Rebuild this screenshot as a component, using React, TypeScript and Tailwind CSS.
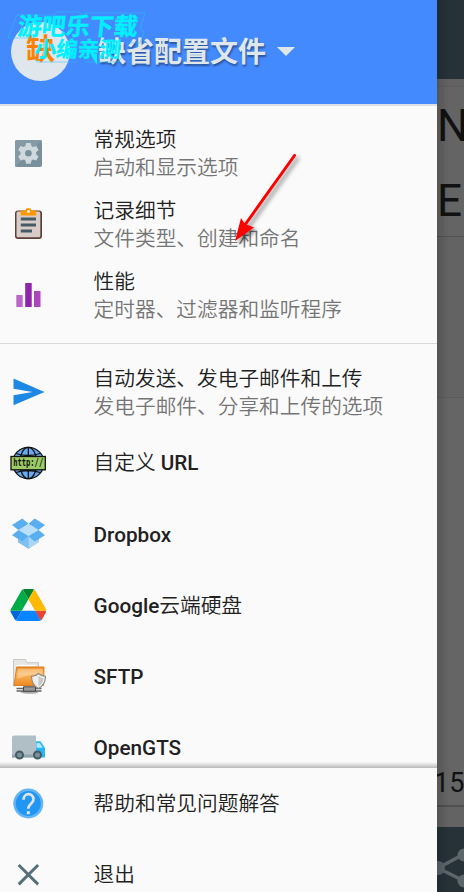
import type { ReactNode } from 'react'

type Item = {
  icon: ReactNode
  title: ReactNode
  subtitle?: string
}

function GearIcon() {
  return (
    <svg className="size-9" viewBox="0 0 36 36">
      <rect x="5" y="5" width="27" height="27" rx="2" fill="#78909c" />
      <path d="M7 5H32L5 32V7a2 2 0 0 1 2-2z" fill="#849aa5" />
      <g fill="#cfd8dc">
        <circle cx="18.400" cy="18.300" r="7.800" />
        {[0, 60, 120].map((angle) => (
          <path key={angle} d="M16.100 7.900h4.600l.9 4v12.800l-.9 4h-4.600l-.9-4V11.900z" transform={`rotate(${angle} 18.400 18.300)`} />
        ))}
      </g>
      <circle cx="18.400" cy="18.300" r="3.300" fill="#78909c" />
    </svg>
  )
}

function ClipboardIcon() {
  return (
    <svg className="size-9" viewBox="0 0 36 36">
      <rect x="5" y="4.500" width="27" height="28.500" rx="3" fill="#5d4037" />
      <rect x="6.500" y="5.500" width="23.800" height="25.700" rx="1.500" fill="#d7ccc8" />
      <path d="M10.700 4.500h4.500a3.300 3.300 0 0 1 6.400 0h4.500v5H10.700z" fill="#ff9800" />
      <circle cx="18.400" cy="5.500" r="1.400" fill="#fff" />
      <path d="M10.800 11.500H26v3H10.800zM10.800 17.500H26v3H10.800zM10.800 23.500H22v3H10.800z" fill="#455a64" />
    </svg>
  )
}

function BarsIcon() {
  return (
    <svg className="size-9" viewBox="0 0 36 36">
      <path d="M6.300 18h6.400v12H6.300z" fill="#ba68c8" />
      <path d="M15.200 6h6.500v24h-6.500z" fill="#8e24aa" />
      <path d="M24 14h6.500v16H24z" fill="#ab47bc" />
    </svg>
  )
}

function SendIcon() {
  return (
    <svg className="size-9" viewBox="0 0 36 36">
      <path d="M3.500 4.500 34.500 18 3.500 31.300V21.200L22.500 18 3.500 14.800z" fill="#1e88e5" />
    </svg>
  )
}

function GlobeIcon() {
  return (
    <svg className="size-9" viewBox="0 0 36 36">
      <g stroke="#111" strokeWidth="1.300" fill="none">
        <circle cx="18.300" cy="18" r="15.700" fill="#6aaaf0" />
        <ellipse cx="18.300" cy="18" rx="8.500" ry="15.700" />
        <path d="M18.300 2v32M6 8.500q12 4 24 0M6 27.500q12-4 24 0" />
      </g>
      <rect x="1" y="11.500" width="34.300" height="13.300" fill="#9ccc65" stroke="#111" strokeWidth="1.300" />
      <text
        x="3.200"
        y="21.300"
        textLength="30"
        lengthAdjust="spacingAndGlyphs"
        fontSize="10"
        fontWeight="700"
        fill="#111"
        fontFamily="'DejaVu Sans Mono', monospace"
      >
        http://
      </text>
    </svg>
  )
}

function DropboxIcon() {
  return (
    <svg className="size-9" viewBox="-0.500 1.500 36 36">
      <path d="M7.500 20.500 18 14l10.500 6.500v6L18 33.300 7.500 26.500z" fill="#90caf9" />
      <path d="M18 20.500 28.500 22v4.500L18 33.300z" fill="#a9d5f7" />
      <path d="M18 8.500 28 14.500 18 20.500 8 14.500z" fill="#bbdefb" />
      <g fill="#58aeee">
        <path d="M11.800 3 18 8.300 8 14.500 1.500 9.500z" />
        <path d="M24.200 3 18 8.300l10 6.200 6.500-5z" />
        <path d="M8 14.500 18 20.700 11.800 26 1.500 19.800z" />
        <path d="M28 14.500 18 20.700l6.200 5.300 10.300-6.200z" />
      </g>
      <path d="m18 21-6.200 5.200-4.300-2.500v3L18 33.300z" fill="#7fc0f2" />
    </svg>
  )
}

function DriveIcon() {
  return (
    <svg className="size-9" viewBox="-1 2.500 87.300 78">
      <path d="m6.600 66.850 3.850 6.650c.8 1.400 1.950 2.500 3.300 3.300l13.750-23.800h-27.500c0 1.550.4 3.100 1.200 4.500z" fill="#0066da" />
      <path d="m43.650 25-13.750-23.800c-1.350.8-2.500 1.900-3.300 3.300l-25.400 44a9.060 9.060 0 0 0 -1.200 4.500h27.500z" fill="#00ac47" />
      <path d="m73.550 76.800c1.350-.8 2.500-1.900 3.300-3.300l1.600-2.750 7.650-13.250c.8-1.400 1.200-2.950 1.200-4.500h-27.502l5.852 11.500z" fill="#ea4335" />
      <path d="m43.650 25 13.750-23.800c-1.350-.8-2.900-1.200-4.500-1.200h-18.500c-1.600 0-3.150.45-4.500 1.200z" fill="#00832d" />
      <path d="m59.800 53h-32.300l-13.750 23.800c1.350.8 2.900 1.200 4.500 1.200h50.800c1.600 0 3.150-.45 4.500-1.200z" fill="#0b84ff" />
      <path d="m73.400 26.500-12.700-22c-.8-1.400-1.950-2.500-3.300-3.300l-13.750 23.800 16.150 28h27.450c0-1.550-.4-3.100-1.200-4.500z" fill="#ffba00" />
    </svg>
  )
}

function SftpIcon() {
  return (
    <svg className="size-9" viewBox="-0.500 1 36 36">
      <defs>
        <linearGradient id="folder" x1="0" y1="0" x2="0" y2="1">
          <stop offset="0" stopColor="#f08c22" />
          <stop offset="0.350" stopColor="#f9b55c" />
          <stop offset="1" stopColor="#ef8a20" />
        </linearGradient>
      </defs>
      <path d="M3 28V1.500h12l1.500 3.200H28V12H8L5 28z" fill="#e6e6e4" stroke="#bdbdbb" strokeWidth="0.800" />
      <path d="M5 7.500h20" stroke="#fff" />
      <path d="M6.200 9h27.300L33 27.500H3.500z" fill="url(#folder)" stroke="#d9771c" strokeWidth="0.900" />
      <path d="M7.500 10.700h24.800l-.5 5Q19 16 7 21z" fill="#fff" opacity="0.300" />
      <ellipse cx="19" cy="34" rx="9" ry="1.700" fill="#aaa" />
      <path d="M6 30.500h25M6 33h25" stroke="#666" strokeWidth="1.400" />
      <path d="M13 28.800h12v4.400H13z" fill="#999" stroke="#444" />
      <path d="M28 15.500q3.500 3 7 2.800Q35 27 28 30.500 21 27 21 18.300q4 .2 7-2.800z" fill="#eeeeec" stroke="#888a85" strokeWidth="1.100" />
      <path d="M28 18q2.300 2 5 2.200Q32.500 26 28 28.500z" fill="#c8c8c5" />
    </svg>
  )
}

function TruckIcon() {
  return (
    <svg className="size-9" viewBox="0 0 36 36">
      <path d="M24 11.300h6.500l4.500 6.700v9.500H24z" fill="#29b6f6" />
      <path d="M26.500 13h3.300l3 4.800h-6.300z" fill="#b3e5fc" />
      <path d="M4 5.500h22V27.500H2V7.500a2 2 0 0 1 2-2z" fill="#b0bec5" />
      <path d="M2 24.500h24v3H2z" fill="#90a4ae" />
      <g fill="#78909c" stroke="#455a64" strokeWidth="2">
        <circle cx="9.500" cy="25" r="3.500" />
        <circle cx="27.500" cy="25" r="3.500" />
      </g>
    </svg>
  )
}

function HelpIcon() {
  return (
    <svg className="size-9" viewBox="0 0 36 36">
      <circle cx="18.300" cy="17.500" r="15" fill="#64b5f6" />
      <circle cx="18.300" cy="17.500" r="12.500" fill="#2196f3" />
      <path d="M13.500 13.800c0-7.500 10-7.300 10-.6 0 4.600-5.200 4.600-5.200 9.600" fill="none" stroke="#dfe4e8" strokeWidth="2.700" />
      <path d="M16.800 25.200h3v3h-3z" fill="#dfe4e8" />
    </svg>
  )
}

function CloseIcon() {
  return (
    <svg className="size-9" viewBox="0 0 36 36">
      <path d="M8.700 8 28.100 27.400M28.100 8 8.700 27.400" stroke="#546e7a" strokeWidth="2.900" />
    </svg>
  )
}

const generalItems: Item[] = [
  { icon: <GearIcon />, title: '常规选项', subtitle: '启动和显示选项' },
  { icon: <ClipboardIcon />, title: '记录细节', subtitle: '文件类型、创建和命名' },
  { icon: <BarsIcon />, title: '性能', subtitle: '定时器、过滤器和监听程序' },
]

const uploadItems: Item[] = [
  { icon: <SendIcon />, title: '自动发送、发电子邮件和上传', subtitle: '发电子邮件、分享和上传的选项' },
  { icon: <GlobeIcon />, title: <>自定义 <span className="font-medium">URL</span></> },
  { icon: <DropboxIcon />, title: <span className="font-medium">Dropbox</span> },
  { icon: <DriveIcon />, title: <><span className="font-medium">Google</span>云端硬盘</> },
  { icon: <SftpIcon />, title: <span className="font-medium">SFTP</span> },
  { icon: <TruckIcon />, title: <span className="font-medium">OpenGTS</span> },
]

const footerItems: Item[] = [
  { icon: <HelpIcon />, title: '帮助和常见问题解答' },
  { icon: <CloseIcon />, title: '退出' },
]

function MenuRow({ icon, title, subtitle }: Item) {
  return (
    <li className="flex h-[71.200px] items-center pl-2.5">
      <div className="w-[83.600px] shrink-0">{icon}</div>
      <div className={`text-[20.700px] leading-7 font-[350] whitespace-nowrap ${subtitle ? 'pt-[2px]' : ''}`}>
        <div className="text-[#212121]">{title}</div>
        {subtitle && <div className="text-[#757575]">{subtitle}</div>}
      </div>
    </li>
  )
}

// Main screen, dimmed while the drawer is open
function DimmedPage() {
  return (
    <div className="flex w-[27px] shrink-0 flex-col overflow-hidden bg-[#636363] text-[#111]">
      <div className="h-[79px] shrink-0 bg-[#263238]" />
      <div className="mt-[7px] flex h-[151px] shrink-0 flex-col border-y border-t-[#5c5c5c] border-b-[#525252] bg-[#646464] pt-[2px] text-[44px] leading-[75px]">
        <div>N</div>
        <div>E</div>
      </div>
      <div className="h-[161px] shrink-0 border-b border-[#5c5c5c]" />
      <div className="flex h-[409px] shrink-0 items-end border-b-2 border-[#505050] bg-[#656565] pb-[6px] text-[27px] leading-8">
        <span className="-ml-[3px]">15</span>
      </div>
      <div className="h-[20px] shrink-0" />
      <div className="flex-1 bg-[#263238]">
        <svg className="h-[65px] w-[27px]" viewBox="0 0 27 65" fill="#5c666b">
          <path d="M1 41 27 27M1 41l26 13" stroke="#5c666b" strokeWidth="3.500" />
          <circle cx="1" cy="41" r="7" />
          <circle cx="27" cy="28" r="6.500" />
          <circle cx="27" cy="54" r="6.500" />
        </svg>
      </div>
    </div>
  )
}

export default function App() {
  return (
    <div className="relative flex h-[892px] w-[464px] overflow-hidden bg-[#636363] font-['Roboto','Noto_Sans_CJK_SC',sans-serif]">
      <aside className="flex w-[437px] shrink-0 flex-col bg-[#fafafa]">
        <header className="flex h-[104px] shrink-0 items-center bg-[#448aff] pl-[11px]">
          <div className="-mt-0.5 flex size-[59px] shrink-0 items-center justify-center rounded-full bg-[#dfe7ec] text-[29px] font-bold text-[#ff8000]">
            缺
          </div>
          <h1 className="mt-[2px] ml-[28px] text-[28px] font-bold whitespace-nowrap text-[#dfe7ec] [text-shadow:1px_2px_2px_rgba(0,0,0,0.4)]">
            缺省配置文件
          </h1>
          <svg className="-mt-0.5 ml-[11px] h-[9px] w-[18px]" viewBox="0 0 18 9">
            <path d="M0 0h18L9 9z" fill="#dfe7ec" />
          </svg>
        </header>

        <nav className="h-[664px] shrink-0 overflow-hidden border-t-2 border-[#dcdfe4]">
          <ul className="pt-[11px] pb-[12px]">
            {generalItems.map((item, i) => (
              <MenuRow key={i} {...item} />
            ))}
          </ul>
          <ul className="border-t border-[#d8d8d8] pt-[13px]">
            {uploadItems.map((item, i) => (
              <MenuRow key={i} {...item} />
            ))}
          </ul>
        </nav>

        <footer className="relative flex-1">
          <div className="absolute inset-x-0 -top-[6px] h-[6px] bg-linear-to-b from-transparent to-[#b8b8b8]" />
          <ul>
            {footerItems.map((item, i) => (
              <MenuRow key={i} {...item} />
            ))}
          </ul>
        </footer>
      </aside>

      <DimmedPage />

      {/* Drawer edge shadow */}
      <div className="absolute inset-y-0 left-[437px] w-3 bg-linear-to-r from-black/15 to-transparent" />

      {/* Watermark */}
      <div className="absolute top-[10px] left-[6px] h-[55px] w-[142px] font-['Noto_Sans_CJK_SC',sans-serif] font-bold text-[#00f0ff]">
        <svg className="absolute inset-0 h-[55px] w-[142px]" viewBox="0 0 142 55" fill="none" stroke="#25c4fb" strokeWidth="1" opacity="0.500">
          <path d="M2 28 11 5h36l4-3h22l4 3 2-2h60l-5 16 4 3-4 11h-9M2 28h26M28 48l3 4h40M78 52h34l4-5" />
        </svg>
        <div className="absolute top-0 left-[12px] -skew-x-6 text-[24px] leading-[30px] whitespace-nowrap [-webkit-text-stroke:0.400px_#00f0ff]">游吧乐下载</div>
        <div className="absolute top-[25px] left-[29px] -skew-x-6 text-[21.500px] leading-[26px] whitespace-nowrap [-webkit-text-stroke:0.400px_#00f0ff]">小编亲测</div>
        <svg className="absolute top-[43px] left-[85px] h-[12px] w-[6px]" viewBox="0 0 6 12">
          <path d="M0 2 6 0v12z" fill="#00f0ff" />
        </svg>
      </div>

      {/* Annotation arrow */}
      <svg
        className="absolute top-[145px] left-[225px] h-[105px] w-[80px] drop-shadow-[3px_3px_2px_rgba(0,0,0,0.45)]"
        viewBox="225 145 80 105"
      >
        <path d="m294.500 155.500-50 70" stroke="#f00" strokeWidth="3" strokeLinecap="round" />
        <path d="m235 241 6-23 4 6 9 3.500z" fill="#f00" />
      </svg>
    </div>
  )
}
